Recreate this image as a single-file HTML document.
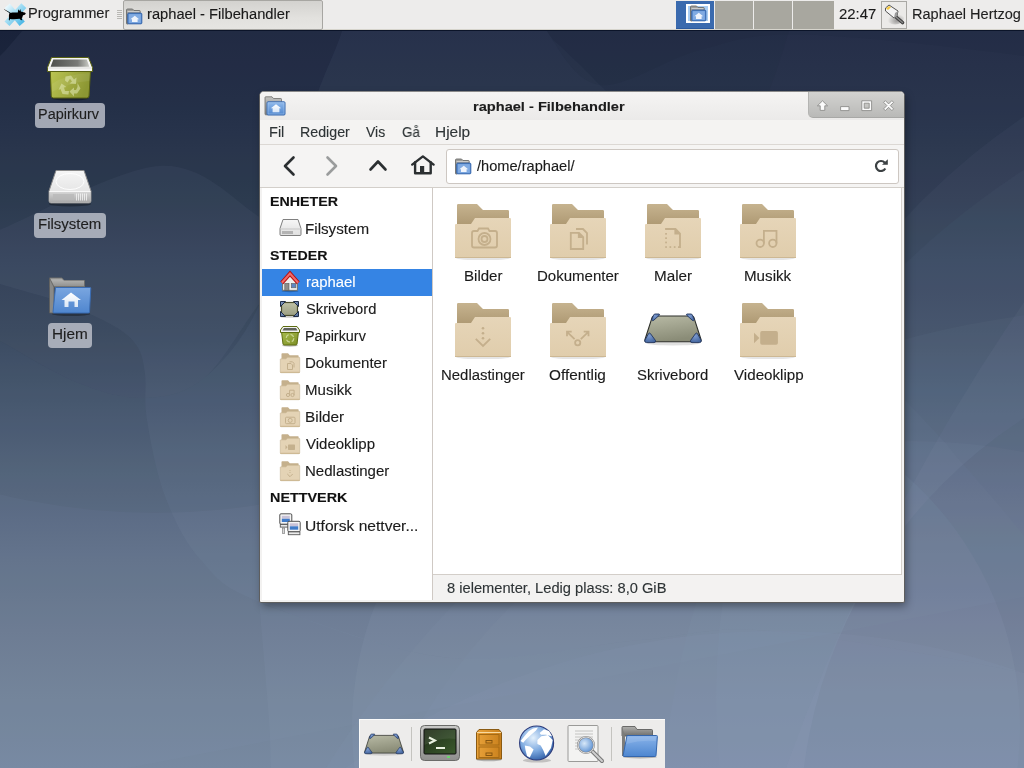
<!DOCTYPE html>
<html><head><meta charset="utf-8"><title>raphael - Filbehandler</title>
<style>
*{margin:0;padding:0;box-sizing:border-box}
html,body{width:1024px;height:768px;overflow:hidden;background:#1c2640}
body{position:relative;font-family:"Liberation Sans",sans-serif}
.t{position:absolute;white-space:pre;line-height:1;transform-origin:0 0;will-change:transform;-webkit-text-stroke:0.12px currentColor}
.a{position:absolute}
svg{position:absolute;overflow:visible}
</style></head><body>
<svg style="left:0;top:0" width="1024" height="768" viewBox="0 0 1024 768">
<defs>
<linearGradient id="bgg" gradientUnits="userSpaceOnUse" x1="0" y1="0" x2="0" y2="768"><stop offset="0.0000" stop-color="#141c33"/><stop offset="0.0391" stop-color="#0e162e"/><stop offset="0.1302" stop-color="#121c32"/><stop offset="0.1953" stop-color="#182238"/><stop offset="0.2604" stop-color="#1d293d"/><stop offset="0.3385" stop-color="#263348"/><stop offset="0.4297" stop-color="#2e3d51"/><stop offset="0.5208" stop-color="#3c4b62"/><stop offset="0.6250" stop-color="#4c5c72"/><stop offset="0.7292" stop-color="#5a6a81"/><stop offset="0.8203" stop-color="#667489"/><stop offset="0.9115" stop-color="#6d7d91"/><stop offset="1.0000" stop-color="#72849b"/></linearGradient>
</defs>
<rect width="1024" height="768" fill="url(#bgg)"/>
<path d="M-40.0 270.0 C-33.3 272.3 -17.2 278.5 0.0 284.0 C17.2 289.5 44.5 296.0 63.5 303.0 C82.5 310.0 101.8 318.8 114.0 326.0 C126.2 333.2 131.8 338.0 137.0 346.0 C142.2 354.0 143.3 361.7 145.0 374.0 C146.7 386.3 143.7 399.7 147.0 420.0 C150.3 440.3 156.2 472.8 165.0 496.0 C173.8 519.2 184.2 541.3 200.0 559.0 C215.8 576.7 218.3 585.5 260.0 602.0 C301.7 618.5 386.7 651.7 450.0 658.0 C513.3 664.3 586.5 644.5 640.0 640.0 C693.5 635.5 707.0 625.5 771.0 631.0 C835.0 636.5 969.2 661.5 1024.0 673.0 C1078.8 684.5 1087.3 695.5 1100.0 700.0 L1100 -50 L-40 -50 Z" fill="#a8bad6" fill-opacity="0.055"/><path d="M-40.0 320.0 C-33.3 323.5 -19.3 330.7 0.0 341.0 C19.3 351.3 52.3 372.5 76.0 382.0 C99.7 391.5 120.8 398.5 142.0 398.0 C163.2 397.5 183.3 394.8 203.0 379.0 C222.7 363.2 243.8 339.5 260.0 303.0 C276.2 266.5 290.5 194.7 300.0 160.0 C309.5 125.3 310.0 116.5 317.0 95.0 C324.0 73.5 336.2 50.2 342.0 31.0 C347.8 11.8 350.3 -11.5 352.0 -20.0 L1100 -20 L1100 800 L-40 800 Z" fill="#a8bad6" fill-opacity="0.055"/><path d="M530.0 -20.0 C532.8 -11.5 534.7 12.8 547.0 31.0 C559.3 49.2 544.5 27.7 604.0 89.0 C663.5 150.3 844.2 336.5 904.0 399.0 C963.8 461.5 943.0 441.2 963.0 464.0 C983.0 486.8 1007.8 515.0 1024.0 536.0 C1040.2 557.0 1054.0 581.0 1060.0 590.0 L-40 800 L-40 -20 Z" fill="#a8bad6" fill-opacity="0.03"/><path d="M530.0 -20.0 C532.8 -11.5 535.3 13.5 547.0 31.0 C558.7 48.5 574.5 81.8 600.0 85.0 C625.5 88.2 666.5 58.4 700.0 50.0 C733.5 41.6 747.0 33.5 801.0 34.5 C855.0 35.5 974.2 49.2 1024.0 56.0 C1073.8 62.8 1087.3 71.8 1100.0 75.0 L1100 -20 Z" fill="#0e1628" fill-opacity="0.08"/><circle cx="1454" cy="836" r="793" fill="#a8bad6" fill-opacity="0.03"/><circle cx="1289" cy="829" r="489" fill="#0e1628" fill-opacity="0.06"/><circle cx="912" cy="1011" r="570" fill="#a8bad6" fill-opacity="0.04"/><circle cx="686" cy="727" r="334" fill="#a8bad6" fill-opacity="0.07"/><path d="M259.0 600.0 C260.7 620.0 267.1 692.0 269.0 720.0 C270.9 748.0 270.2 754.7 270.7 768.0 C271.2 781.3 271.8 794.7 272.0 800.0 L1100 800 L1100.0 700.0 C1087.3 695.5 1078.8 684.5 1024.0 673.0 C969.2 661.5 835.0 636.5 771.0 631.0 C707.0 625.5 693.5 635.5 640.0 640.0 C586.5 644.5 512.7 663.8 450.0 658.0 C387.3 652.2 295.0 613.8 264.0 605.0 Z" fill="#a8bad6" fill-opacity="0.06"/><circle cx="1159" cy="1288" r="982" fill="#a8bad6" fill-opacity="0.045"/><circle cx="1417" cy="697" r="701" fill="#a8bad6" fill-opacity="0.045"/><circle cx="2671" cy="1437" r="2000" fill="#a8bad6" fill-opacity="0.05"/><circle cx="777" cy="1379" r="748" fill="#a8bad6" fill-opacity="0.05"/><circle cx="155" cy="-145" r="658" fill="#0e1628" fill-opacity="0.035"/><path d="M-20.0 70.0 C-16.7 67.7 -7.2 62.7 0.0 56.0 C7.2 49.3 16.3 37.7 23.0 30.0 C29.7 22.3 37.2 13.3 40.0 10.0 L1100 10 L1100 800 L-20 800 Z" fill="#a8bad6" fill-opacity="0.06"/><path d="M-40.0 245.0 C-33.3 242.5 -33.2 243.0 0.0 229.8 C33.2 216.6 117.0 168.6 159.5 166.0 C202.0 163.4 231.6 198.3 255.0 214.0 C278.4 229.7 292.5 252.3 300.0 260.0 L300.0 260.0 C293.3 267.2 276.2 283.2 260.0 303.0 C243.8 322.8 222.7 363.2 203.0 379.0 C183.3 394.8 163.2 397.5 142.0 398.0 C120.8 398.5 99.7 391.5 76.0 382.0 C52.3 372.5 19.3 351.3 0.0 341.0 C-19.3 330.7 -33.3 323.5 -40.0 320.0 Z" fill="#a8bad6" fill-opacity="0.05"/>
</svg><div class="a" style="left:0;top:0;width:1024px;height:30px;background:#edeceb;border-bottom:1px solid #d6d4cc"></div><div class="a" style="left:0;top:30px;width:1024px;height:1px;background:#0b1429"></div><svg style="left:0px;top:0px" width="32" height="30" viewBox="0 0 32 30">
<defs><linearGradient id="xg" x1="0" y1="0" x2="1" y2="1"><stop offset="0" stop-color="#eaf8fd"/><stop offset="0.45" stop-color="#9fdcf3"/><stop offset="1" stop-color="#4cb8e6"/></linearGradient></defs>
<g stroke="url(#xg)" stroke-width="6.8" stroke-linecap="butt">
<path d="M7.2 5.8 L22.2 23.8"/><path d="M23.8 5.6 L7 23.8"/>
</g>
<path d="M4.2 9.2 L9.8 12.3 L10.2 12.8 C12 12.5 15 12.3 17.8 12.5 L18.3 9.3 L19.5 11 L20.2 9 L21 11.8 C22.3 11.8 24.5 12.3 25.8 13.3 C25.5 14.5 24.3 15.3 23 15.2 L22.2 17.8 L21.7 18.5 L22.3 20.2 L20.8 20 L19.6 18.8 C16.5 19.3 12.5 19.3 10 19 L9.6 20.5 L8.8 20 L9 17.5 C8.8 16 9 14 9.5 13 L4 9.6 Z" fill="#000"/>
</svg><div class="t" style="left:28.35px;top:6.45px;font-size:14px;font-weight:400;color:#1f1f1f;transform:scaleX(1.0458);">Programmer</div><div class="a" style="left:117px;top:10px;width:5px;height:1px;background:#b9b8b4"></div><div class="a" style="left:117px;top:12px;width:5px;height:1px;background:#b9b8b4"></div><div class="a" style="left:117px;top:14px;width:5px;height:1px;background:#b9b8b4"></div><div class="a" style="left:117px;top:16px;width:5px;height:1px;background:#b9b8b4"></div><div class="a" style="left:117px;top:18px;width:5px;height:1px;background:#b9b8b4"></div><div class="a" style="left:123px;top:0px;width:200px;height:30px;border:1px solid #a7a6a2;border-radius:2px;background:linear-gradient(#d3d2cf,#e2e1de 60%,#e6e5e2)"></div><svg style="left:126px;top:8px" width="17" height="17" viewBox="0 0 17 17">
<path d="M0.5 2 Q0.5 1 1.5 1 H6.5 L8 2.5 H13.5 Q14.2 2.5 14.2 3.2 V6 H2 V16 H1 Q0.5 16 0.5 15.5 Z" fill="#9d9d9b" stroke="#6e6e6c" stroke-width="0.9"/>
<path d="M1.5 3.5 H13.5" stroke="#d8d8d6" stroke-width="0.8"/>
<rect x="1.8" y="5.2" width="14" height="10.6" rx="0.8" fill="#5f92d6" stroke="#3163ab" stroke-width="1"/>
<rect x="2.8" y="6.2" width="12" height="8.6" fill="#9dc0ec" opacity="0.55"/>
<path d="M8.8 7.8 L13.2 11.2 H11.6 V14 H6 V11.2 H4.4 Z" fill="#f4f8fd" opacity="0.95"/>
</svg><div class="t" style="left:147.36px;top:7.45px;font-size:14px;font-weight:400;color:#1a1a1a;transform:scaleX(1.0489);">raphael - Filbehandler</div><div class="a" style="left:676px;top:1px;width:38px;height:28px;background:#3a6aae;border-bottom:1px solid #2b5a9f"></div><div class="a" style="left:686px;top:4px;width:24px;height:19px;background:#a9cdf3;border:2px solid #fff"></div><svg style="left:690px;top:5px" width="17" height="17" viewBox="0 0 17 17">
<path d="M0.5 2 Q0.5 1 1.5 1 H6.5 L8 2.5 H13.5 Q14.2 2.5 14.2 3.2 V6 H2 V16 H1 Q0.5 16 0.5 15.5 Z" fill="#9d9d9b" stroke="#6e6e6c" stroke-width="0.9"/>
<path d="M1.5 3.5 H13.5" stroke="#d8d8d6" stroke-width="0.8"/>
<rect x="1.8" y="5.2" width="14" height="10.6" rx="0.8" fill="#5f92d6" stroke="#3163ab" stroke-width="1"/>
<rect x="2.8" y="6.2" width="12" height="8.6" fill="#9dc0ec" opacity="0.55"/>
<path d="M8.8 7.8 L13.2 11.2 H11.6 V14 H6 V11.2 H4.4 Z" fill="#f4f8fd" opacity="0.95"/>
</svg><div class="a" style="left:715px;top:1px;width:38px;height:28px;background:#a8a79f"></div><div class="a" style="left:754px;top:1px;width:38px;height:28px;background:#a8a79f"></div><div class="a" style="left:793px;top:1px;width:41px;height:28px;background:#a8a79f"></div><div class="t" style="left:838.85px;top:6.65px;font-size:14px;font-weight:400;color:#1a1a1a;transform:scaleX(1.0655);">22:47</div><div class="a" style="left:881px;top:1px;width:26px;height:28px;border:1px solid #a9a8a4;background:#ebeae8"></div><svg style="left:884px;top:4px" width="20" height="20" viewBox="0 0 20 20">
<defs><radialGradient id="plsh" cx="0.6" cy="0.7" r="0.5"><stop offset="0" stop-color="#000" stop-opacity="0.35"/><stop offset="1" stop-color="#000" stop-opacity="0"/></radialGradient></defs>
<ellipse cx="11" cy="14" rx="9" ry="6.5" fill="url(#plsh)"/>
<path d="M12 13 L18.5 18.5" stroke="#3e3e3e" stroke-width="3.6" stroke-linecap="round"/><path d="M12 13 L18.5 18.5" stroke="#8a8a8a" stroke-width="1.4" stroke-linecap="round"/>
<path d="M1.5 4 L5 1 L14 7 L13 12 L10 14 L1.5 7 Z" fill="#f3f3f3" stroke="#555" stroke-width="1"/>
<path d="M2 4.5 L5 2 L7 3.3 L4 6 Z" fill="#f5c842"/>
<path d="M10 14 L13 12 L14 7 L11 9 Z" fill="#9a9a9a"/>
</svg><div class="t" style="left:911.66px;top:6.65px;font-size:14px;font-weight:400;color:#1f1f1f;transform:scaleX(1.0369);">Raphael Hertzog</div><svg style="left:46px;top:54px" width="48" height="48" viewBox="0 0 48 48">
<defs>
<linearGradient id="trb" x1="0" y1="0" x2="1" y2="0.3"><stop offset="0" stop-color="#bcc552"/><stop offset="1" stop-color="#8c9733"/></linearGradient>
<linearGradient id="tri" x1="0" y1="0" x2="1" y2="0"><stop offset="0" stop-color="#4f514d"/><stop offset="0.7" stop-color="#7a7b77"/><stop offset="1" stop-color="#c9cbc5"/></linearGradient>
</defs>
<ellipse cx="24" cy="44.5" rx="18" ry="2" fill="#000" opacity="0.3"/>
<path d="M4.3 17 H44.5 L43 42 Q42.8 44 40.8 44 H7.5 Q5.5 44 5.3 42 Z" fill="url(#trb)" stroke="#5a6312" stroke-width="1"/>
<path d="M6 30 Q20 20 44 19 L43.5 27 Q25 28 5.8 38 Z" fill="#fff" opacity="0.07"/>
<path d="M5.5 3.5 H42.5 L46.5 13.5 V17.5 H1.5 V13.5 Z" fill="#f6f6f4" stroke="#5a6312" stroke-width="1" stroke-linejoin="round"/>
<path d="M7.3 5.5 H40.8 L43.3 12.8 H4.6 Z" fill="url(#tri)"/>
<path d="M2 14 H46" stroke="#dcdcda" stroke-width="1"/>
<g fill="#e4eab8" opacity="0.55">
<path d="M19.5 22.5 L25 21.5 L28 25.5 L30.5 23.5 L30 30 L23.5 29.5 L26 27.5 L24 24.8 L21.5 28.5 L19 26.5 Z"/>
<path d="M31.5 29 L34.5 34.5 L31 39.5 L28 39.5 L28 42.5 L23.5 37.5 L28 33.5 L28 36 L30 36 L31.5 33 Z"/>
<path d="M21.5 40.5 L16.5 40 L14.5 35 L12.5 36 L15.5 29.5 L20.5 33 L18 33.5 L19 37 L23 37 L22.5 40.5 Z"/>
</g>
</svg><div class="a" style="left:35px;top:103px;width:70px;height:25px;background:rgba(190,194,204,0.82);border-radius:4px"></div><div class="t" style="left:38.47px;top:107.45px;font-size:14px;font-weight:400;color:#1e1e1e;transform:scaleX(1.0311);">Papirkurv</div><svg style="left:46px;top:163px" width="48" height="48" viewBox="0 0 48 48">
<defs>
<linearGradient id="dvt" x1="0" y1="0" x2="0" y2="1"><stop offset="0" stop-color="#f6f6f6"/><stop offset="1" stop-color="#dcdcdc"/></linearGradient>
<linearGradient id="dvf" x1="0" y1="0" x2="0" y2="1"><stop offset="0" stop-color="#d8d8d8"/><stop offset="1" stop-color="#a9a9a9"/></linearGradient>
</defs>
<ellipse cx="24" cy="41" rx="21" ry="2.5" fill="#000" opacity="0.3"/>
<path d="M10 7.5 L38 7.5 L45 28 L45 38 Q45 40 43 40 L5 40 Q3 40 3 38 L3 28 Z" fill="url(#dvt)" stroke="#8a8a8a" stroke-width="1"/>
<ellipse cx="24" cy="18.5" rx="14" ry="8" fill="none" stroke="#ffffff" stroke-width="1" opacity="0.9"/>
<path d="M3.5 28.5 H44.5 V38 Q44.5 39.5 43 39.5 H5 Q3.5 39.5 3.5 38 Z" fill="url(#dvf)"/>
<path d="M3.5 28.5 H44.5" stroke="#f8f8f8" stroke-width="1"/>
<rect x="7" y="31" width="21" height="6" fill="#b9b9b9" opacity="0.8"/>
<g stroke="#f4f4f4" stroke-width="0.8"><path d="M30.5 30.5v7M32.5 30.5v7M34.5 30.5v7M36.5 30.5v7M38.5 30.5v7M40.5 30.5v7"/></g>
</svg><div class="a" style="left:34px;top:213px;width:72px;height:25px;background:rgba(190,194,204,0.82);border-radius:4px"></div><div class="t" style="left:37.72px;top:217.45px;font-size:14px;font-weight:400;color:#1e1e1e;transform:scaleX(1.0701);">Filsystem</div><svg style="left:46px;top:272px" width="48" height="48" viewBox="0 0 48 48">
<defs>
<linearGradient id="hfb" x1="0" y1="0" x2="0" y2="1"><stop offset="0" stop-color="#7aa6e0"/><stop offset="1" stop-color="#4f86cf"/></linearGradient>
<linearGradient id="hfg" x1="0" y1="0" x2="0" y2="1"><stop offset="0" stop-color="#b5b5b3"/><stop offset="1" stop-color="#7a7a78"/></linearGradient>
<linearGradient id="hfh" x1="0" y1="0" x2="0" y2="1"><stop offset="0" stop-color="#ffffff"/><stop offset="1" stop-color="#dce8f6"/></linearGradient>
</defs>
<ellipse cx="25" cy="42" rx="19" ry="2" fill="#000" opacity="0.3"/>
<path d="M3.5 6 H16 L18 8.5 H38.5 V15 H3.5 Z" fill="url(#hfg)" stroke="#6d6d6b" stroke-width="1"/>
<g stroke="#d2d2d0" stroke-width="0.6" opacity="0.8"><path d="M4 9h34M4 11h34M4 13h34"/></g>
<path d="M3.5 6 V41 H8 V15 Z" fill="#8a8a88" stroke="#5d5d5b" stroke-width="0.8"/>
<path d="M9.5 15.5 H44 Q45 15.5 44.8 16.5 L43.5 40 Q43.4 41 42.4 41 H8 Q7 41 7 40 Z" fill="url(#hfb)" stroke="#3a6cb3" stroke-width="1"/>
<path d="M25 20.5 L35 28 H32 V35 H28.5 V29.5 H22.5 V35 H18.5 V28 H15.5 Z" fill="url(#hfh)"/>
</svg><div class="a" style="left:48px;top:323px;width:44px;height:25px;background:rgba(190,194,204,0.82);border-radius:4px"></div><div class="t" style="left:51.50px;top:327.45px;font-size:14px;font-weight:400;color:#1e1e1e;transform:scaleX(1.0948);">Hjem</div><div class="a" style="left:259px;top:91px;width:646px;height:512px;border-radius:5px 5px 2px 2px;box-shadow:2px 4px 8px -1px rgba(0,0,0,0.38)"></div><div class="a" style="left:259px;top:91px;width:646px;height:512px;border-radius:5px 5px 2px 2px;background:#f3f2f1;border:1px solid #5e5e5e;border-top-color:#8a8a8a"></div><div class="a" style="left:260px;top:92px;width:644px;height:28px;border-radius:4px 4px 0 0;background:linear-gradient(#f5f4f3,#ebeae9)"></div><svg style="left:264px;top:96px" width="22" height="20" viewBox="0 0 22 20">
<defs>
<linearGradient id="wib" x1="0" y1="0" x2="0" y2="1"><stop offset="0" stop-color="#92bbec"/><stop offset="1" stop-color="#4f86ce"/></linearGradient>
<linearGradient id="wig" x1="0" y1="0" x2="0" y2="1"><stop offset="0" stop-color="#c2c2c0"/><stop offset="1" stop-color="#858583"/></linearGradient>
<linearGradient id="wih" x1="0" y1="0" x2="0" y2="1"><stop offset="0" stop-color="#ffffff"/><stop offset="1" stop-color="#d6e5f7"/></linearGradient>
</defs>
<path d="M1 1.5 Q1 0.8 1.7 0.8 H8 L9.5 2.5 H16.8 Q17.5 2.5 17.5 3.3 V7 H3.5 V18.8 H1.7 Q1 18.8 1 18 Z" fill="url(#wig)" stroke="#6d6d6b" stroke-width="0.8"/>
<rect x="3" y="5.8" width="18" height="13.2" rx="1" fill="url(#wib)" stroke="#3566ad" stroke-width="1"/>
<rect x="4" y="6.8" width="16" height="11.2" fill="none" stroke="#c0d8f5" stroke-width="0.7" opacity="0.6"/>
<path d="M12 8.3 L17.2 12.3 H15.4 V16.3 H8.6 V12.3 H6.8 Z" fill="url(#wih)"/>
</svg><div class="t" style="left:473.47px;top:101.22px;font-size:12.5px;font-weight:700;color:#1c1c1c;transform:scaleX(1.1676);">raphael - Filbehandler</div><div class="a" style="left:808px;top:92px;width:96px;height:26px;border-radius:0 4px 0 5px;background:linear-gradient(#d2d2d0,#c6c6c4 50%,#b9b9b7);border-left:1px solid #b4b4b2;border-bottom:1px solid #a8a8a6"></div><svg style="left:817px;top:100px" width="12" height="12" viewBox="0 0 12 12"><path d="M5.5 0.8 L10.6 5.8 L7.8 5.8 L7.8 10.4 L3.2 10.4 L3.2 5.8 L0.4 5.8 Z" fill="#fbfbfb" stroke="#8c8c8a" stroke-width="0.9" stroke-linejoin="round"/></svg><svg style="left:840px;top:106px" width="10" height="6" viewBox="0 0 10 6"><rect x="0.6" y="0.6" width="8.4" height="4" fill="#fbfbfb" stroke="#8c8c8a" stroke-width="0.9" stroke-linejoin="round"/></svg><svg style="left:861px;top:100px" width="12" height="12" viewBox="0 0 12 12"><path d="M0.8 0.8 H10.6 V10.6 H0.8 Z M3.2 3.2 V8.2 H8.2 V3.2 Z" fill-rule="evenodd" fill="#fbfbfb" stroke="#8c8c8a" stroke-width="0.9" stroke-linejoin="round"/></svg><svg style="left:883px;top:100px" width="12" height="12" viewBox="0 0 12 12"><path d="M0.6 2.3 L2.3 0.6 L5.6 3.9 L8.9 0.6 L10.6 2.3 L7.3 5.6 L10.6 8.9 L8.9 10.6 L5.6 7.3 L2.3 10.6 L0.6 8.9 L3.9 5.6 Z" fill="#fbfbfb" stroke="#8c8c8a" stroke-width="0.9" stroke-linejoin="round"/></svg><div class="a" style="left:260px;top:120px;width:644px;height:24px;background:#f4f3f2"></div><div class="a" style="left:260px;top:144px;width:644px;height:1px;background:#dcd8d4"></div><div class="t" style="left:269.46px;top:125.45px;font-size:14px;font-weight:400;color:#2e3436;transform:scaleX(1.0394);">Fil</div><div class="t" style="left:300.18px;top:125.45px;font-size:14px;font-weight:400;color:#2e3436;transform:scaleX(1.0168);">Rediger</div><div class="t" style="left:366.30px;top:125.45px;font-size:14px;font-weight:400;color:#2e3436;transform:scaleX(1.0000);">Vis</div><div class="t" style="left:401.53px;top:125.45px;font-size:14px;font-weight:400;color:#2e3436;transform:scaleX(0.9556);">Gå</div><div class="t" style="left:434.99px;top:125.45px;font-size:14px;font-weight:400;color:#2e3436;transform:scaleX(1.1026);">Hjelp</div><div class="a" style="left:260px;top:145px;width:644px;height:42px;background:#f5f4f3"></div><svg style="left:282px;top:155px" width="14" height="22" viewBox="0 0 14 22"><path d="M11.5 2.5 L3 11 L11.5 19.5" stroke="#2b2f31" fill="none" stroke-width="2.6" stroke-linecap="round" stroke-linejoin="round"/></svg><svg style="left:325px;top:155px" width="14" height="22" viewBox="0 0 14 22"><path d="M2.5 2.5 L11 11 L2.5 19.5" stroke="#9a9c9c" fill="none" stroke-width="2.6" stroke-linecap="round" stroke-linejoin="round"/></svg><svg style="left:368px;top:158px" width="20" height="14" viewBox="0 0 20 14"><path d="M2.5 11.5 L10 3.5 L17.5 11.5" stroke="#2b2f31" fill="none" stroke-width="2.6" stroke-linecap="round" stroke-linejoin="round"/></svg><svg style="left:410px;top:155px" width="26" height="21" viewBox="0 0 26 21"><g fill="none" stroke="#2b2f31" stroke-width="2.4" stroke-linecap="round" stroke-linejoin="round"><path d="M2.2 9.6 L12.9 1.4 L23.6 9.6"/><path d="M5.1 7.2 V18.3 H20.7 V7.2"/></g><rect x="10" y="11" width="4.2" height="7" fill="#2b2f31"/></svg><div class="a" style="left:446px;top:149px;width:453px;height:35px;background:#fff;border:1px solid #cdc7c2;border-radius:3px"></div><svg style="left:455px;top:158px" width="17" height="17" viewBox="0 0 17 17">
<path d="M0.5 2 Q0.5 1 1.5 1 H6.5 L8 2.5 H13.5 Q14.2 2.5 14.2 3.2 V6 H2 V16 H1 Q0.5 16 0.5 15.5 Z" fill="#9d9d9b" stroke="#6e6e6c" stroke-width="0.9"/>
<path d="M1.5 3.5 H13.5" stroke="#d8d8d6" stroke-width="0.8"/>
<rect x="1.8" y="5.2" width="14" height="10.6" rx="0.8" fill="#5f92d6" stroke="#3163ab" stroke-width="1"/>
<rect x="2.8" y="6.2" width="12" height="8.6" fill="#9dc0ec" opacity="0.55"/>
<path d="M8.8 7.8 L13.2 11.2 H11.6 V14 H6 V11.2 H4.4 Z" fill="#f4f8fd" opacity="0.95"/>
</svg><div class="t" style="left:477.20px;top:159.35px;font-size:14px;font-weight:400;color:#1b1b1b;transform:scaleX(1.0439);">/home/raphael/</div><svg style="left:874px;top:159px" width="15" height="14" viewBox="0 0 15 14"><path d="M11.3 9.5 A5 5 0 1 1 10.8 3.8" fill="none" stroke="#3c4143" stroke-width="2.2"/><path d="M8 5.7 L13.8 5.7 L13.8 0.2 Z" fill="#3c4143"/></svg><div class="a" style="left:260px;top:187px;width:644px;height:1px;background:#d3cfca"></div><div class="a" style="left:262px;top:188px;width:170px;height:412px;background:#fff"></div><div class="a" style="left:432px;top:188px;width:1px;height:412px;background:#cfc9c4"></div><div class="a" style="left:433px;top:188px;width:468px;height:386px;background:#fff"></div><div class="a" style="left:901px;top:188px;width:1px;height:387px;background:#d7d2cd"></div><div class="a" style="left:433px;top:574px;width:469px;height:1px;background:#d3cec9"></div><div class="t" style="left:446.87px;top:581.15px;font-size:14px;font-weight:400;color:#2e3436;transform:scaleX(1.0481);">8 ielementer, Ledig plass: 8,0 GiB</div><div class="t" style="left:269.71px;top:195.10px;font-size:13px;font-weight:700;color:#111;transform:scaleX(1.0969);">ENHETER</div><div class="t" style="left:270.26px;top:249.00px;font-size:13px;font-weight:700;color:#111;transform:scaleX(1.0904);">STEDER</div><div class="t" style="left:269.60px;top:491.40px;font-size:13px;font-weight:700;color:#111;transform:scaleX(1.1058);">NETTVERK</div><div class="a" style="left:262px;top:269px;width:170px;height:27px;background:#3584e4"></div><svg style="left:279px;top:218px" width="23" height="19" viewBox="0 0 23 19">
<defs><linearGradient id="sdv" x1="0" y1="0" x2="0" y2="1"><stop offset="0" stop-color="#f7f7f7"/><stop offset="1" stop-color="#dedede"/></linearGradient></defs>
<path d="M4 1.5 H19 L22 10.5 V16.5 Q22 17.5 21 17.5 H2 Q1 17.5 1 16.5 V10.5 Z" fill="url(#sdv)" stroke="#7f7f7f" stroke-width="1"/>
<path d="M1.5 11 H21.5" stroke="#c7c7c7" stroke-width="1"/>
<rect x="3" y="13" width="11" height="3" fill="#b3b3b3"/>
<g stroke="#e6e6e6" stroke-width="0.6"><path d="M15.5 12.5v4M17 12.5v4M18.5 12.5v4M20 12.5v4"/></g>
</svg><div class="t" style="left:305.11px;top:221.55px;font-size:14px;font-weight:400;color:#1b1b1b;transform:scaleX(1.0841);">Filsystem</div><svg style="left:276px;top:266px" width="28" height="30" viewBox="0 0 28 30">
<defs><linearGradient id="hsw" x1="0" y1="0" x2="0" y2="1"><stop offset="0" stop-color="#e4e4e2"/><stop offset="1" stop-color="#fbfbfa"/></linearGradient></defs>
<ellipse cx="14" cy="25" rx="8.5" ry="1.2" fill="#000" opacity="0.25"/>
<path d="M6.6 14.5 V24.3 H21.4 V14.5 L14 8.5 Z" fill="url(#hsw)" stroke="#6e6a60" stroke-width="0.9"/>
<path d="M5.8 16.8 L14 7.6 L22.2 16.8" fill="none" stroke="#b80f0f" stroke-width="4" stroke-linejoin="miter" stroke-linecap="butt"/>
<path d="M5.8 16.8 L14 7.6 L22.2 16.8" fill="none" stroke="#f06a6a" stroke-width="2.1" stroke-linejoin="miter" stroke-linecap="butt"/>
<rect x="8.8" y="17.5" width="4.2" height="6.8" fill="#8d8d8a" stroke="#555" stroke-width="0.6"/>
<rect x="15.3" y="17.5" width="4.6" height="4.3" fill="#5d86c4" stroke="#666" stroke-width="0.7"/>
</svg><div class="t" style="left:305.54px;top:275.45px;font-size:14px;font-weight:400;color:#ffffff;transform:scaleX(1.0624);">raphael</div><svg style="left:279px;top:300px" width="21" height="18" viewBox="0 0 21 18">
<defs><linearGradient id="sdk" x1="0" y1="0" x2="0" y2="1"><stop offset="0" stop-color="#bfc2a6"/><stop offset="1" stop-color="#9b9e82"/></linearGradient>
<linearGradient id="sdc" x1="0" y1="0" x2="1" y2="1"><stop offset="0" stop-color="#8aa2c8"/><stop offset="1" stop-color="#4b6590"/></linearGradient></defs>
<ellipse cx="10.5" cy="17" rx="9" ry="1" fill="#000" opacity="0.15"/>
<rect x="2.5" y="2.5" width="16" height="13" fill="url(#sdk)" stroke="#4a4d2c" stroke-width="1.2"/>
<g fill="url(#sdc)" stroke="#1f2d47" stroke-width="1" stroke-linejoin="round">
<path d="M1.5 1.5 H6.5 L1.5 6.5 Z"/><path d="M19.5 1.5 H14.5 L19.5 6.5 Z"/><path d="M1.5 16.5 V11.5 L6.5 16.5 Z"/><path d="M19.5 16.5 V11.5 L14.5 16.5 Z"/>
</g></svg><div class="t" style="left:305.76px;top:302.30px;font-size:14px;font-weight:400;color:#1b1b1b;transform:scaleX(1.0521);">Skrivebord</div><svg style="left:279px;top:325px" width="22" height="22" viewBox="0 0 22 22">
<defs><linearGradient id="stb" x1="0" y1="0" x2="1" y2="1"><stop offset="0" stop-color="#a8bc4c"/><stop offset="1" stop-color="#7d8f26"/></linearGradient></defs>
<ellipse cx="11" cy="20.5" rx="8" ry="1.2" fill="#000" opacity="0.25"/>
<path d="M2.5 6.5 H19.5 L18 19 Q17.8 20 16.8 20 H5.2 Q4.2 20 4 19 Z" fill="url(#stb)" stroke="#5d6c10" stroke-width="1"/>
<path d="M4 1.5 H18 L20.5 5 V7.5 H1.5 V5 Z" fill="#f1f1ef" stroke="#5d6c10" stroke-width="1"/>
<path d="M5 3 H17 L18.5 5.5 H3.5 Z" fill="#5f615c"/>
<circle cx="11" cy="13.2" r="3.8" fill="none" stroke="#d6e0a8" stroke-width="1.3" stroke-dasharray="4 2" opacity="0.8"/>
</svg><div class="t" style="left:305.37px;top:329.35px;font-size:14px;font-weight:400;color:#1b1b1b;transform:scaleX(1.0294);">Papirkurv</div><svg style="left:280px;top:353px" width="20" height="20" viewBox="0 0 20 20">
<path d="M1.5 1 Q1.5 0.3 2.2 0.3 H8 L9.8 2.2 H18 Q18.6 2.2 18.6 2.8 V9 H1.5 Z" fill="#c5b08c"/>
<path d="M0.3 6.5 Q0.3 5.8 1 5.8 H6 L7.5 4.2 H19 Q19.7 4.2 19.7 4.9 V19 Q19.7 19.7 19 19.7 H1 Q0.3 19.7 0.3 19 Z" fill="#e4d3b5" stroke="#c6b28e" stroke-width="0.6"/>
<rect x="0.3" y="18.8" width="19.4" height="1" fill="#cbb690"/>
<path d="M7.5 10.5 H11 L12.5 12 V16.5 H7.5 Z" fill="none" stroke="#c4b08d" stroke-width="1"/><path d="M9.5 8.8 H12.5 L14 10.3 V14.5" fill="none" stroke="#c4b08d" stroke-width="1"/></svg><div class="t" style="left:305.32px;top:356.45px;font-size:14px;font-weight:400;color:#1b1b1b;transform:scaleX(1.0748);">Dokumenter</div><svg style="left:280px;top:380px" width="20" height="20" viewBox="0 0 20 20">
<path d="M1.5 1 Q1.5 0.3 2.2 0.3 H8 L9.8 2.2 H18 Q18.6 2.2 18.6 2.8 V9 H1.5 Z" fill="#c5b08c"/>
<path d="M0.3 6.5 Q0.3 5.8 1 5.8 H6 L7.5 4.2 H19 Q19.7 4.2 19.7 4.9 V19 Q19.7 19.7 19 19.7 H1 Q0.3 19.7 0.3 19 Z" fill="#e4d3b5" stroke="#c6b28e" stroke-width="0.6"/>
<rect x="0.3" y="18.8" width="19.4" height="1" fill="#cbb690"/>
<circle cx="8" cy="15" r="1.6" fill="none" stroke="#c4b08d" stroke-width="1"/><circle cx="12.5" cy="15" r="1.6" fill="none" stroke="#c4b08d" stroke-width="1"/><path d="M9.6 15 V10.2 H14.1 V15" fill="none" stroke="#c4b08d" stroke-width="1"/></svg><div class="t" style="left:305.32px;top:383.35px;font-size:14px;font-weight:400;color:#1b1b1b;transform:scaleX(1.0755);">Musikk</div><svg style="left:280px;top:407px" width="20" height="20" viewBox="0 0 20 20">
<path d="M1.5 1 Q1.5 0.3 2.2 0.3 H8 L9.8 2.2 H18 Q18.6 2.2 18.6 2.8 V9 H1.5 Z" fill="#c5b08c"/>
<path d="M0.3 6.5 Q0.3 5.8 1 5.8 H6 L7.5 4.2 H19 Q19.7 4.2 19.7 4.9 V19 Q19.7 19.7 19 19.7 H1 Q0.3 19.7 0.3 19 Z" fill="#e4d3b5" stroke="#c6b28e" stroke-width="0.6"/>
<rect x="0.3" y="18.8" width="19.4" height="1" fill="#cbb690"/>
<rect x="5.5" y="10.2" width="9.5" height="6.5" rx="1" fill="none" stroke="#c4b08d" stroke-width="1"/><circle cx="10.2" cy="13.4" r="2" fill="none" stroke="#c4b08d" stroke-width="1"/></svg><div class="t" style="left:305.29px;top:410.45px;font-size:14px;font-weight:400;color:#1b1b1b;transform:scaleX(1.0957);">Bilder</div><svg style="left:280px;top:434px" width="20" height="20" viewBox="0 0 20 20">
<path d="M1.5 1 Q1.5 0.3 2.2 0.3 H8 L9.8 2.2 H18 Q18.6 2.2 18.6 2.8 V9 H1.5 Z" fill="#c5b08c"/>
<path d="M0.3 6.5 Q0.3 5.8 1 5.8 H6 L7.5 4.2 H19 Q19.7 4.2 19.7 4.9 V19 Q19.7 19.7 19 19.7 H1 Q0.3 19.7 0.3 19 Z" fill="#e4d3b5" stroke="#c6b28e" stroke-width="0.6"/>
<rect x="0.3" y="18.8" width="19.4" height="1" fill="#cbb690"/>
<rect x="8" y="10.5" width="7" height="5.5" rx="0.7" fill="#c4b08d"/><path d="M5.5 11 L7.5 13.2 L5.5 15.4 Z" fill="#c4b08d"/></svg><div class="t" style="left:306.39px;top:437.30px;font-size:14px;font-weight:400;color:#1b1b1b;transform:scaleX(1.0722);">Videoklipp</div><svg style="left:280px;top:461px" width="20" height="20" viewBox="0 0 20 20">
<path d="M1.5 1 Q1.5 0.3 2.2 0.3 H8 L9.8 2.2 H18 Q18.6 2.2 18.6 2.8 V9 H1.5 Z" fill="#c5b08c"/>
<path d="M0.3 6.5 Q0.3 5.8 1 5.8 H6 L7.5 4.2 H19 Q19.7 4.2 19.7 4.9 V19 Q19.7 19.7 19 19.7 H1 Q0.3 19.7 0.3 19 Z" fill="#e4d3b5" stroke="#c6b28e" stroke-width="0.6"/>
<rect x="0.3" y="18.8" width="19.4" height="1" fill="#cbb690"/>
<path d="M7.3 13 L10 15.7 L12.7 13" fill="none" stroke="#c4b08d" stroke-width="1"/><g fill="#c4b08d"><circle cx="10" cy="9.5" r="0.6"/><circle cx="10" cy="11.5" r="0.6"/></g></svg><div class="t" style="left:305.32px;top:464.15px;font-size:14px;font-weight:400;color:#1b1b1b;transform:scaleX(1.0724);">Nedlastinger</div><svg style="left:279px;top:513px" width="22" height="23" viewBox="0 0 22 23">
<rect x="0.8" y="0.8" width="12" height="10.4" rx="1.2" fill="#f4f4f4" stroke="#505050" stroke-width="1"/>
<rect x="2.8" y="2.8" width="8" height="3" fill="#c8c2d8"/><rect x="2.8" y="5.8" width="8" height="3.2" fill="#3f7bc9"/>
<rect x="1.3" y="11.5" width="11" height="2.6" fill="#e9e9e9" stroke="#5a5a5a" stroke-width="0.9"/>
<rect x="3.3" y="15" width="2.4" height="5.5" fill="#d8d8d8" stroke="#777" stroke-width="0.6"/>
<rect x="8.8" y="8.3" width="12.4" height="10.4" rx="1.2" fill="#f6f6f6" stroke="#505050" stroke-width="1"/>
<rect x="10.8" y="10.3" width="8.4" height="3" fill="#c8c2d8"/><rect x="10.8" y="13.3" width="8.4" height="3.4" fill="#3f7bc9"/>
<rect x="9.3" y="18.9" width="11.6" height="2.8" fill="#ececec" stroke="#5a5a5a" stroke-width="0.9"/>
</svg><div class="t" style="left:305.28px;top:518.55px;font-size:14px;font-weight:400;color:#1b1b1b;transform:scaleX(1.1126);">Utforsk nettver...</div><svg style="left:455px;top:204px" width="56" height="56" viewBox="0 0 56 56">
<defs>
<linearGradient id="fb455204" x1="0" y1="0" x2="0" y2="1"><stop offset="0" stop-color="#c6b38f"/><stop offset="1" stop-color="#ad9872"/></linearGradient>
<linearGradient id="ff455204" x1="0" y1="0" x2="0" y2="1"><stop offset="0" stop-color="#e6d5b8"/><stop offset="1" stop-color="#e0cdac"/></linearGradient>
</defs>
<ellipse cx="28" cy="54.5" rx="27" ry="1.6" fill="#000" opacity="0.10"/>
<path d="M2 1.2 Q2 0 3.2 0 H22 L28 6 H52.8 Q54 6 54 7.2 V22 H2 Z" fill="url(#fb455204)"/>
<path d="M0 21 Q0 20 1 20 H16 L20 14 H55 Q56 14 56 15 V53 Q56 54 55 54 H1 Q0 54 0 53 Z" fill="url(#ff455204)"/>
<rect x="0" y="53" width="56" height="1" fill="#cdb894"/>
<path d="M17 29 Q17 27 19 27 H22.5 L24 24.5 H33 L34.5 27 H40 Q42 27 42 29 V41.5 Q42 43.5 40 43.5 H19 Q17 43.5 17 41.5 Z" fill="none" stroke="#c4af8c" stroke-width="1.8"/>
<circle cx="29.5" cy="35" r="6" fill="none" stroke="#c4af8c" stroke-width="1.8"/><circle cx="29.5" cy="35" r="3" fill="none" stroke="#c4af8c" stroke-width="1.8"/></svg><div class="t" style="left:463.62px;top:268.55px;font-size:14px;font-weight:400;color:#1b1b1b;transform:scaleX(1.0754);">Bilder</div><svg style="left:550px;top:204px" width="56" height="56" viewBox="0 0 56 56">
<defs>
<linearGradient id="fb550204" x1="0" y1="0" x2="0" y2="1"><stop offset="0" stop-color="#c6b38f"/><stop offset="1" stop-color="#ad9872"/></linearGradient>
<linearGradient id="ff550204" x1="0" y1="0" x2="0" y2="1"><stop offset="0" stop-color="#e6d5b8"/><stop offset="1" stop-color="#e0cdac"/></linearGradient>
</defs>
<ellipse cx="28" cy="54.5" rx="27" ry="1.6" fill="#000" opacity="0.10"/>
<path d="M2 1.2 Q2 0 3.2 0 H22 L28 6 H52.8 Q54 6 54 7.2 V22 H2 Z" fill="url(#fb550204)"/>
<path d="M0 21 Q0 20 1 20 H16 L20 14 H55 Q56 14 56 15 V53 Q56 54 55 54 H1 Q0 54 0 53 Z" fill="url(#ff550204)"/>
<rect x="0" y="53" width="56" height="1" fill="#cdb894"/>
<path d="M20.8 28.8 H29 L33.2 33 V45 H20.8 Z" fill="none" stroke="#c4af8c" stroke-width="1.8"/><path d="M28.5 28.8 V33.5 H33.2" fill="#c4af8c" stroke="#c4af8c" stroke-width="1.2"/>
<path d="M26 25 H33 L37 29 V40.5" fill="none" stroke="#c4af8c" stroke-width="1.8"/></svg><div class="t" style="left:537.42px;top:268.55px;font-size:14px;font-weight:400;color:#1b1b1b;transform:scaleX(1.0734);">Dokumenter</div><svg style="left:645px;top:204px" width="56" height="56" viewBox="0 0 56 56">
<defs>
<linearGradient id="fb645204" x1="0" y1="0" x2="0" y2="1"><stop offset="0" stop-color="#c6b38f"/><stop offset="1" stop-color="#ad9872"/></linearGradient>
<linearGradient id="ff645204" x1="0" y1="0" x2="0" y2="1"><stop offset="0" stop-color="#e6d5b8"/><stop offset="1" stop-color="#e0cdac"/></linearGradient>
</defs>
<ellipse cx="28" cy="54.5" rx="27" ry="1.6" fill="#000" opacity="0.10"/>
<path d="M2 1.2 Q2 0 3.2 0 H22 L28 6 H52.8 Q54 6 54 7.2 V22 H2 Z" fill="url(#fb645204)"/>
<path d="M0 21 Q0 20 1 20 H16 L20 14 H55 Q56 14 56 15 V53 Q56 54 55 54 H1 Q0 54 0 53 Z" fill="url(#ff645204)"/>
<rect x="0" y="53" width="56" height="1" fill="#cdb894"/>
<path d="M21 26 V25 H30.5 L35 29.5 V43.2 H33" fill="none" stroke="#c4af8c" stroke-width="1.8"/><path d="M30 25 V30 H35" fill="#c4af8c" stroke="#c4af8c" stroke-width="1.2"/>
<g fill="#c4af8c"><rect x="20.2" y="29" width="1.7" height="1.7"/><rect x="20.2" y="33.3" width="1.7" height="1.7"/><rect x="20.2" y="37.6" width="1.7" height="1.7"/><rect x="20.2" y="42.2" width="1.7" height="1.7"/><rect x="24.5" y="42.2" width="1.7" height="1.7"/><rect x="28.8" y="42.2" width="1.7" height="1.7"/></g></svg><div class="t" style="left:654.20px;top:268.55px;font-size:14px;font-weight:400;color:#1b1b1b;transform:scaleX(1.0890);">Maler</div><svg style="left:740px;top:204px" width="56" height="56" viewBox="0 0 56 56">
<defs>
<linearGradient id="fb740204" x1="0" y1="0" x2="0" y2="1"><stop offset="0" stop-color="#c6b38f"/><stop offset="1" stop-color="#ad9872"/></linearGradient>
<linearGradient id="ff740204" x1="0" y1="0" x2="0" y2="1"><stop offset="0" stop-color="#e6d5b8"/><stop offset="1" stop-color="#e0cdac"/></linearGradient>
</defs>
<ellipse cx="28" cy="54.5" rx="27" ry="1.6" fill="#000" opacity="0.10"/>
<path d="M2 1.2 Q2 0 3.2 0 H22 L28 6 H52.8 Q54 6 54 7.2 V22 H2 Z" fill="url(#fb740204)"/>
<path d="M0 21 Q0 20 1 20 H16 L20 14 H55 Q56 14 56 15 V53 Q56 54 55 54 H1 Q0 54 0 53 Z" fill="url(#ff740204)"/>
<rect x="0" y="53" width="56" height="1" fill="#cdb894"/>
<circle cx="20.2" cy="39.3" r="3.7" fill="none" stroke="#c4af8c" stroke-width="1.8"/><circle cx="32.8" cy="39.3" r="3.7" fill="none" stroke="#c4af8c" stroke-width="1.8"/>
<path d="M23.9 39.3 V26.8 H36.5 V39.3" fill="none" stroke="#c4af8c" stroke-width="1.8"/></svg><div class="t" style="left:744.01px;top:268.55px;font-size:14px;font-weight:400;color:#1b1b1b;transform:scaleX(1.0825);">Musikk</div><svg style="left:455px;top:303px" width="56" height="56" viewBox="0 0 56 56">
<defs>
<linearGradient id="fb455303" x1="0" y1="0" x2="0" y2="1"><stop offset="0" stop-color="#c6b38f"/><stop offset="1" stop-color="#ad9872"/></linearGradient>
<linearGradient id="ff455303" x1="0" y1="0" x2="0" y2="1"><stop offset="0" stop-color="#e6d5b8"/><stop offset="1" stop-color="#e0cdac"/></linearGradient>
</defs>
<ellipse cx="28" cy="54.5" rx="27" ry="1.6" fill="#000" opacity="0.10"/>
<path d="M2 1.2 Q2 0 3.2 0 H22 L28 6 H52.8 Q54 6 54 7.2 V22 H2 Z" fill="url(#fb455303)"/>
<path d="M0 21 Q0 20 1 20 H16 L20 14 H55 Q56 14 56 15 V53 Q56 54 55 54 H1 Q0 54 0 53 Z" fill="url(#ff455303)"/>
<rect x="0" y="53" width="56" height="1" fill="#cdb894"/>
<g fill="#c4af8c"><circle cx="28" cy="25.2" r="1.3"/><circle cx="28" cy="30.2" r="1.3"/><circle cx="28" cy="35.2" r="1.3"/></g>
<path d="M20.8 35.8 L28 43 L35.2 35.8" fill="none" stroke="#c4af8c" stroke-width="1.8"/></svg><div class="t" style="left:441.23px;top:367.55px;font-size:14px;font-weight:400;color:#1b1b1b;transform:scaleX(1.0660);">Nedlastinger</div><svg style="left:550px;top:303px" width="56" height="56" viewBox="0 0 56 56">
<defs>
<linearGradient id="fb550303" x1="0" y1="0" x2="0" y2="1"><stop offset="0" stop-color="#c6b38f"/><stop offset="1" stop-color="#ad9872"/></linearGradient>
<linearGradient id="ff550303" x1="0" y1="0" x2="0" y2="1"><stop offset="0" stop-color="#e6d5b8"/><stop offset="1" stop-color="#e0cdac"/></linearGradient>
</defs>
<ellipse cx="28" cy="54.5" rx="27" ry="1.6" fill="#000" opacity="0.10"/>
<path d="M2 1.2 Q2 0 3.2 0 H22 L28 6 H52.8 Q54 6 54 7.2 V22 H2 Z" fill="url(#fb550303)"/>
<path d="M0 21 Q0 20 1 20 H16 L20 14 H55 Q56 14 56 15 V53 Q56 54 55 54 H1 Q0 54 0 53 Z" fill="url(#ff550303)"/>
<rect x="0" y="53" width="56" height="1" fill="#cdb894"/>
<circle cx="27.7" cy="39.8" r="2.6" fill="none" stroke="#c4af8c" stroke-width="1.8"/>
<path d="M24.6 36.2 L17 28.8 M17 33.3 V28.6 H21.7 M30.8 36.2 L38.4 28.8 M33.7 28.6 H38.5 V33.3" fill="none" stroke="#c4af8c" stroke-width="1.8"/></svg><div class="t" style="left:549.43px;top:367.55px;font-size:14px;font-weight:400;color:#1b1b1b;transform:scaleX(1.0954);">Offentlig</div><svg style="left:644px;top:313px" width="58" height="31" viewBox="0 0 58 31">
<defs><linearGradient id="dskv" x1="0" y1="0" x2="0.3" y2="1"><stop offset="0" stop-color="#b9bba6"/><stop offset="1" stop-color="#8a8c77"/></linearGradient>
<radialGradient id="dskcv" cx="0.4" cy="0.3" r="0.8"><stop offset="0" stop-color="#7d9bd0"/><stop offset="1" stop-color="#3d5f98"/></radialGradient></defs>
<ellipse cx="29" cy="30.5" rx="26" ry="2" fill="#000" opacity="0.12"/>
<path d="M10 3 H48 Q49.3 3 49.8 4.2 L57 26.5 Q57.5 28.7 55.5 28.7 H2.5 Q0.5 28.7 1 26.5 L8.2 4.2 Q8.7 3 10 3 Z" fill="url(#dskv)" stroke="#2c2e2a" stroke-width="1.1"/>
<g fill="url(#dskcv)" stroke="#22365c" stroke-width="0.9" stroke-linejoin="round">
<path d="M7.6 6.8 L9.6 2 Q10.1 1 11.1 1 H15 Q16 1.2 15.3 2.2 L9.6 7.4 Q8.5 8.2 7.6 6.8 Z"/>
<path d="M50.4 6.8 L48.4 2 Q47.9 1 46.9 1 H43 Q42 1.2 42.7 2.2 L48.4 7.4 Q49.5 8.2 50.4 6.8 Z"/>
<path d="M0.8 27.3 L4.6 20.5 Q5.5 19.5 6.4 20.5 L11.5 27.5 Q12 29.6 10 29.6 H2.5 Q0.4 29.6 0.8 27.3 Z"/>
<path d="M57.2 27.3 L53.4 20.5 Q52.5 19.5 51.6 20.5 L46.5 27.5 Q46 29.6 48 29.6 H55.5 Q57.6 29.6 57.2 27.3 Z"/>
</g></svg><div class="t" style="left:637.45px;top:367.55px;font-size:14px;font-weight:400;color:#1b1b1b;transform:scaleX(1.0643);">Skrivebord</div><svg style="left:740px;top:303px" width="56" height="56" viewBox="0 0 56 56">
<defs>
<linearGradient id="fb740303" x1="0" y1="0" x2="0" y2="1"><stop offset="0" stop-color="#c6b38f"/><stop offset="1" stop-color="#ad9872"/></linearGradient>
<linearGradient id="ff740303" x1="0" y1="0" x2="0" y2="1"><stop offset="0" stop-color="#e6d5b8"/><stop offset="1" stop-color="#e0cdac"/></linearGradient>
</defs>
<ellipse cx="28" cy="54.5" rx="27" ry="1.6" fill="#000" opacity="0.10"/>
<path d="M2 1.2 Q2 0 3.2 0 H22 L28 6 H52.8 Q54 6 54 7.2 V22 H2 Z" fill="url(#fb740303)"/>
<path d="M0 21 Q0 20 1 20 H16 L20 14 H55 Q56 14 56 15 V53 Q56 54 55 54 H1 Q0 54 0 53 Z" fill="url(#ff740303)"/>
<rect x="0" y="53" width="56" height="1" fill="#cdb894"/>
<rect x="20.2" y="28.1" width="17.7" height="13.6" rx="1.8" fill="#c4af8c"/><path d="M14 29.8 L19.4 35 L14 40.2 Z" fill="#c4af8c"/></svg><div class="t" style="left:733.79px;top:367.55px;font-size:14px;font-weight:400;color:#1b1b1b;transform:scaleX(1.0832);">Videoklipp</div><div class="a" style="left:359px;top:719px;width:306px;height:49px;background:#edeceb;border-top:1px solid #fbfbfa;border-left:1px solid #fbfbfa"></div><svg style="left:364px;top:733px" width="40" height="22" viewBox="0 0 58 31">
<defs><linearGradient id="dskd" x1="0" y1="0" x2="0.3" y2="1"><stop offset="0" stop-color="#b9bba6"/><stop offset="1" stop-color="#8a8c77"/></linearGradient>
<radialGradient id="dskcd" cx="0.4" cy="0.3" r="0.8"><stop offset="0" stop-color="#7d9bd0"/><stop offset="1" stop-color="#3d5f98"/></radialGradient></defs>
<ellipse cx="29" cy="30.5" rx="26" ry="2" fill="#000" opacity="0.12"/>
<path d="M10 3 H48 Q49.3 3 49.8 4.2 L57 26.5 Q57.5 28.7 55.5 28.7 H2.5 Q0.5 28.7 1 26.5 L8.2 4.2 Q8.7 3 10 3 Z" fill="url(#dskd)" stroke="#2c2e2a" stroke-width="1.1"/>
<g fill="url(#dskcd)" stroke="#22365c" stroke-width="0.9" stroke-linejoin="round">
<path d="M7.6 6.8 L9.6 2 Q10.1 1 11.1 1 H15 Q16 1.2 15.3 2.2 L9.6 7.4 Q8.5 8.2 7.6 6.8 Z"/>
<path d="M50.4 6.8 L48.4 2 Q47.9 1 46.9 1 H43 Q42 1.2 42.7 2.2 L48.4 7.4 Q49.5 8.2 50.4 6.8 Z"/>
<path d="M0.8 27.3 L4.6 20.5 Q5.5 19.5 6.4 20.5 L11.5 27.5 Q12 29.6 10 29.6 H2.5 Q0.4 29.6 0.8 27.3 Z"/>
<path d="M57.2 27.3 L53.4 20.5 Q52.5 19.5 51.6 20.5 L46.5 27.5 Q46 29.6 48 29.6 H55.5 Q57.6 29.6 57.2 27.3 Z"/>
</g></svg><div class="a" style="left:411px;top:727px;width:1px;height:34px;background:#c4c3bf"></div><div class="a" style="left:611px;top:727px;width:1px;height:34px;background:#c4c3bf"></div><svg style="left:420px;top:725px" width="40" height="36" viewBox="0 0 40 36">
<defs>
<linearGradient id="tmb" x1="0" y1="0" x2="0" y2="1"><stop offset="0" stop-color="#c9c9c7"/><stop offset="1" stop-color="#8e8e8c"/></linearGradient>
<linearGradient id="tms" x1="0" y1="0" x2="1" y2="1"><stop offset="0" stop-color="#1f2b17"/><stop offset="0.5" stop-color="#2d4423"/><stop offset="1" stop-color="#3b5a2c"/></linearGradient>
</defs>
<rect x="0.5" y="0.5" width="39" height="35" rx="4" fill="url(#tmb)" stroke="#6b6b69" stroke-width="1"/>
<rect x="4" y="4" width="32" height="25" rx="1" fill="url(#tms)" stroke="#111" stroke-width="1"/>
<path d="M4.5 4.5 H35.5 V14 Q20 12 4.5 20 Z" fill="#fff" opacity="0.08"/>
<path d="M9 12.5 L15 15.5 L9 18.5" fill="none" stroke="#e8f0e0" stroke-width="2"/>
<rect x="16" y="22" width="9" height="2" fill="#e8f0e0"/>
<rect x="27" y="31" width="3" height="2" fill="#6bd36b"/>
</svg><svg style="left:476px;top:729px" width="26" height="32" viewBox="0 0 26 32">
<defs><linearGradient id="cab" x1="0" y1="0" x2="1" y2="0"><stop offset="0" stop-color="#e9a23a"/><stop offset="1" stop-color="#c9801c"/></linearGradient></defs>
<ellipse cx="13" cy="30.5" rx="13" ry="1.8" fill="#000" opacity="0.25"/>
<path d="M3 0.5 H23 L25.5 3.5 V30 H0.5 V3.5 Z" fill="url(#cab)" stroke="#8a5a12" stroke-width="1"/>
<path d="M1 3.5 H25" stroke="#f8d9a0" stroke-width="1"/>
<rect x="3" y="5.5" width="20" height="10.5" fill="none" stroke="#a56a14" stroke-width="1"/>
<rect x="3" y="18" width="20" height="10.5" fill="none" stroke="#a56a14" stroke-width="1"/>
<rect x="10" y="11.5" width="6" height="2.5" fill="none" stroke="#7e500e" stroke-width="0.9"/>
<rect x="10" y="24" width="6" height="2.5" fill="none" stroke="#7e500e" stroke-width="0.9"/>
</svg><svg style="left:518px;top:725px" width="37" height="37" viewBox="0 0 37 37">
<defs>
<radialGradient id="glb" cx="0.4" cy="0.35" r="0.7"><stop offset="0" stop-color="#e3f0fc"/><stop offset="0.55" stop-color="#7eaae0"/><stop offset="1" stop-color="#2f5ea6"/></radialGradient>
</defs>
<ellipse cx="19" cy="35.5" rx="14" ry="2" fill="#000" opacity="0.18"/>
<circle cx="18.6" cy="18" r="17" fill="url(#glb)" stroke="#2c3b7a" stroke-width="1.1"/>
<g fill="#fff">
<path d="M2.5 16 L6.8 10.7 L10.7 6.3 L15 3.6 L20 2.5 L18 5.5 L13.4 9.6 L8 14.5 L5.2 17.8 Z"/>
<path d="M6.8 20.5 L12 21.5 L15.6 24.4 L11.8 32.6 L9 31 L7.5 25 Z"/>
<path d="M19.4 15 L23.3 11.2 L29.8 10.1 L34.7 15 L33 23 L27.6 31 L25.4 25.4 L22.7 20.5 L19.4 18.9 Z"/>
<path d="M21.6 8 L26 4.2 L31 6 L34.2 11.5 L28 9.7 L23 9.8 Z"/>
</g>
</svg><svg style="left:567px;top:725px" width="38" height="39" viewBox="0 0 38 39">
<defs><radialGradient id="mag" cx="0.4" cy="0.4" r="0.6"><stop offset="0" stop-color="#d8e8f8"/><stop offset="1" stop-color="#5f93d4"/></radialGradient></defs>
<rect x="1" y="0.5" width="30" height="36" rx="1" fill="#f3f3f2" stroke="#9a9a98" stroke-width="1"/>
<g stroke="#c4c4c2" stroke-width="1"><path d="M8 6h18M8 9h18M8 12h18M8 15h18M8 18h14M8 21h12M8 24h12"/></g>
<path d="M24 25 L35 36" stroke="#777" stroke-width="4" stroke-linecap="round"/>
<path d="M24 25 L35 36" stroke="#cfcfcf" stroke-width="2" stroke-linecap="round"/>
<circle cx="19" cy="20" r="8" fill="url(#mag)" stroke="#888" stroke-width="2"/>
<circle cx="19" cy="20" r="8" fill="none" stroke="#eee" stroke-width="0.8"/>
</svg><svg style="left:621px;top:726px" width="37" height="33" viewBox="0 0 37 33">
<defs>
<linearGradient id="dfg" x1="0" y1="0" x2="0" y2="1"><stop offset="0" stop-color="#b0b0ae"/><stop offset="1" stop-color="#6e6e6c"/></linearGradient>
<linearGradient id="dfb" x1="0" y1="0" x2="0" y2="1"><stop offset="0" stop-color="#8ab4ea"/><stop offset="1" stop-color="#4d86d0"/></linearGradient>
</defs>
<ellipse cx="19" cy="31" rx="17" ry="1.5" fill="#000" opacity="0.25"/>
<path d="M1 1.5 Q1 0.5 2 0.5 H14 L16 3.5 H30.5 Q31.5 3.5 31.5 4.5 V10 H1 Z" fill="url(#dfg)" stroke="#5f5f5d" stroke-width="0.9"/>
<path d="M1 1 V30 H4 V10 Z" fill="#7c7c7a"/>
<path d="M6 9.5 H35.5 Q36.5 9.5 36.4 10.5 L35 29.5 Q34.9 30.5 33.9 30.5 H3 Q2 30.5 2.1 29.5 Z" fill="url(#dfb)" stroke="#3466ad" stroke-width="1"/>
<path d="M6 10.5 H35 L34.7 15 Q20 13.5 5.3 18 Z" fill="#fff" opacity="0.12"/>
</svg>
</body></html>
